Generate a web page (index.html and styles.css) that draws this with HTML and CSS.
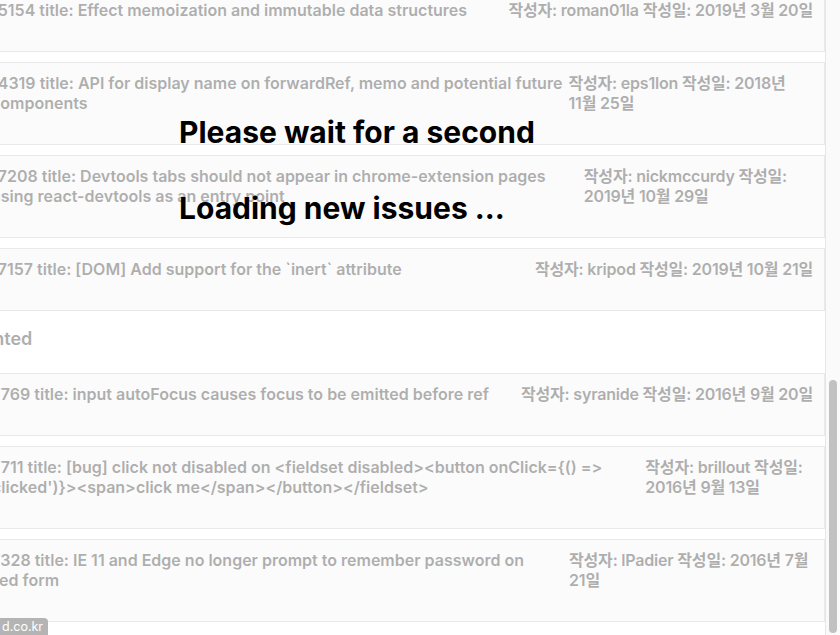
FILE: index.html
```html
<!DOCTYPE html>
<html lang="ko">
<head>
<meta charset="utf-8">
<title>Issues</title>
<link rel="stylesheet" href="styles.css">
</head>
<body>
<div class="app">
  <main class="viewport">
    <div class="issues">
      <section class="issue-section">
        <ul class="issue-list">
          <li class="issue"><p class="issue-title">15154 title: Effect memoization and immutable data structures</p><p class="issue-meta">작성자: roman01la 작성일: 2019년 3월 20일</p></li>
          <li class="issue"><p class="issue-title">14319 title: API for display name on forwardRef, memo and potential future components</p><p class="issue-meta">작성자: eps1lon 작성일: 2018년 11월 25일</p></li>
          <li class="issue"><p class="issue-title">17208 title: Devtools tabs should not appear in chrome-extension pages using react-devtools as an entry point</p><p class="issue-meta">작성자: nickmccurdy 작성일: 2019년 10월 29일</p></li>
          <li class="issue"><p class="issue-title">17157 title: [DOM] Add support for the `inert` attribute</p><p class="issue-meta">작성자: kripod 작성일: 2019년 10월 21일</p></li>
        </ul>
      </section>
      <section class="issue-section issue-section--wide">
        <h2 class="section-title">Commented</h2>
        <ul class="issue-list">
          <li class="issue"><p class="issue-title">Issue 7769 title: input autoFocus causes focus to be emitted before ref</p><p class="issue-meta">작성자: syranide 작성일: 2016년 9월 20일</p></li>
          <li class="issue"><p class="issue-title">Issue 7711 title: [bug] click not disabled on &lt;fieldset disabled&gt;&lt;button onClick={() =&gt; alert('clicked')}&gt;&lt;span&gt;click me&lt;/span&gt;&lt;/button&gt;&lt;/fieldset&gt;</p><p class="issue-meta">작성자: brillout 작성일: 2016년 9월 13일</p></li>
          <li class="issue"><p class="issue-title">Issue 7328 title: IE 11 and Edge no longer prompt to remember password on autofilled form</p><p class="issue-meta">작성자: lPadier 작성일: 2016년 7월 21일</p></li>
        </ul>
      </section>
    </div>
    <div class="loading">
      <h1 class="loading-line">Please wait for a second</h1>
      <h1 class="loading-line">Loading new issues ...</h1>
    </div>
    <div class="status">d.co.kr</div>
  </main>
  <div class="scrollbar"><div class="scrollbar-thumb"></div></div>
</div>
</body>
</html>
```

FILE: styles.css
```css
html, body {
  margin: 0;
  padding: 0;
  height: 100%;
  overflow: hidden;
  background: #ffffff;
  font-family: Inter, "Noto Sans CJK KR", sans-serif;
  font-variant-ligatures: none;
  font-feature-settings: "calt" 0, "liga" 0;
}

.app {
  display: flex;
  height: 100vh;
}

.viewport {
  flex: 1 1 auto;
  min-width: 0;
  position: relative;
  overflow: hidden;
}

.issues {
  margin: -11px 0 0 -22px;
  opacity: 0.36;
  color: #222222;
}

.issue-section--wide {
  margin-left: -45px;
}

.issue-list {
  list-style: none;
  margin: 0;
  padding: 0;
  display: flex;
  flex-direction: column;
  gap: 10px;
}

.issue {
  display: flex;
  justify-content: space-between;
  gap: 4px;
  padding: 10px 11px 31px 12px;
  background: #f6f6f6;
  border: 1px solid #c4c4c4;
  font-size: 16px;
  line-height: 20px;
  font-weight: 600;
}

.issue-title,
.issue-meta {
  margin: 0;
}

.issue-title {
  flex: 1 1 auto;
  min-width: 0;
}

.issue-meta {
  flex: 0 1 auto;
  word-break: keep-all;
  letter-spacing: -0.2px;
}

.section-title {
  margin: 16px 0 22px -7px;
  font-size: 18px;
  line-height: 24px;
  font-weight: 600;
}

.loading {
  position: absolute;
  inset: 0;
  display: flex;
  flex-direction: column;
  gap: 40px;
  padding: 114px 0 0 179px;
  color: #000000;
}

.loading-line {
  margin: 0;
  font-size: 30px;
  line-height: 36px;
  font-weight: 700;
}

.status {
  position: absolute;
  left: 0;
  bottom: 0;
  height: 17px;
  padding: 0 5px 0 2px;
  background: #b4b4b4;
  color: #ffffff;
  font-size: 12.5px;
  line-height: 17px;
  border-top-right-radius: 4px;
}

.scrollbar {
  flex: 0 0 15px;
  box-sizing: border-box;
  background: #fafafa;
  border-left: 1px solid #e6e6e6;
  display: flex;
  flex-direction: column;
  padding: 380px 3px 2px 3px;
}

.scrollbar-thumb {
  flex: 1 1 auto;
  background: #c1c1c1;
  border-radius: 4px;
}
```
